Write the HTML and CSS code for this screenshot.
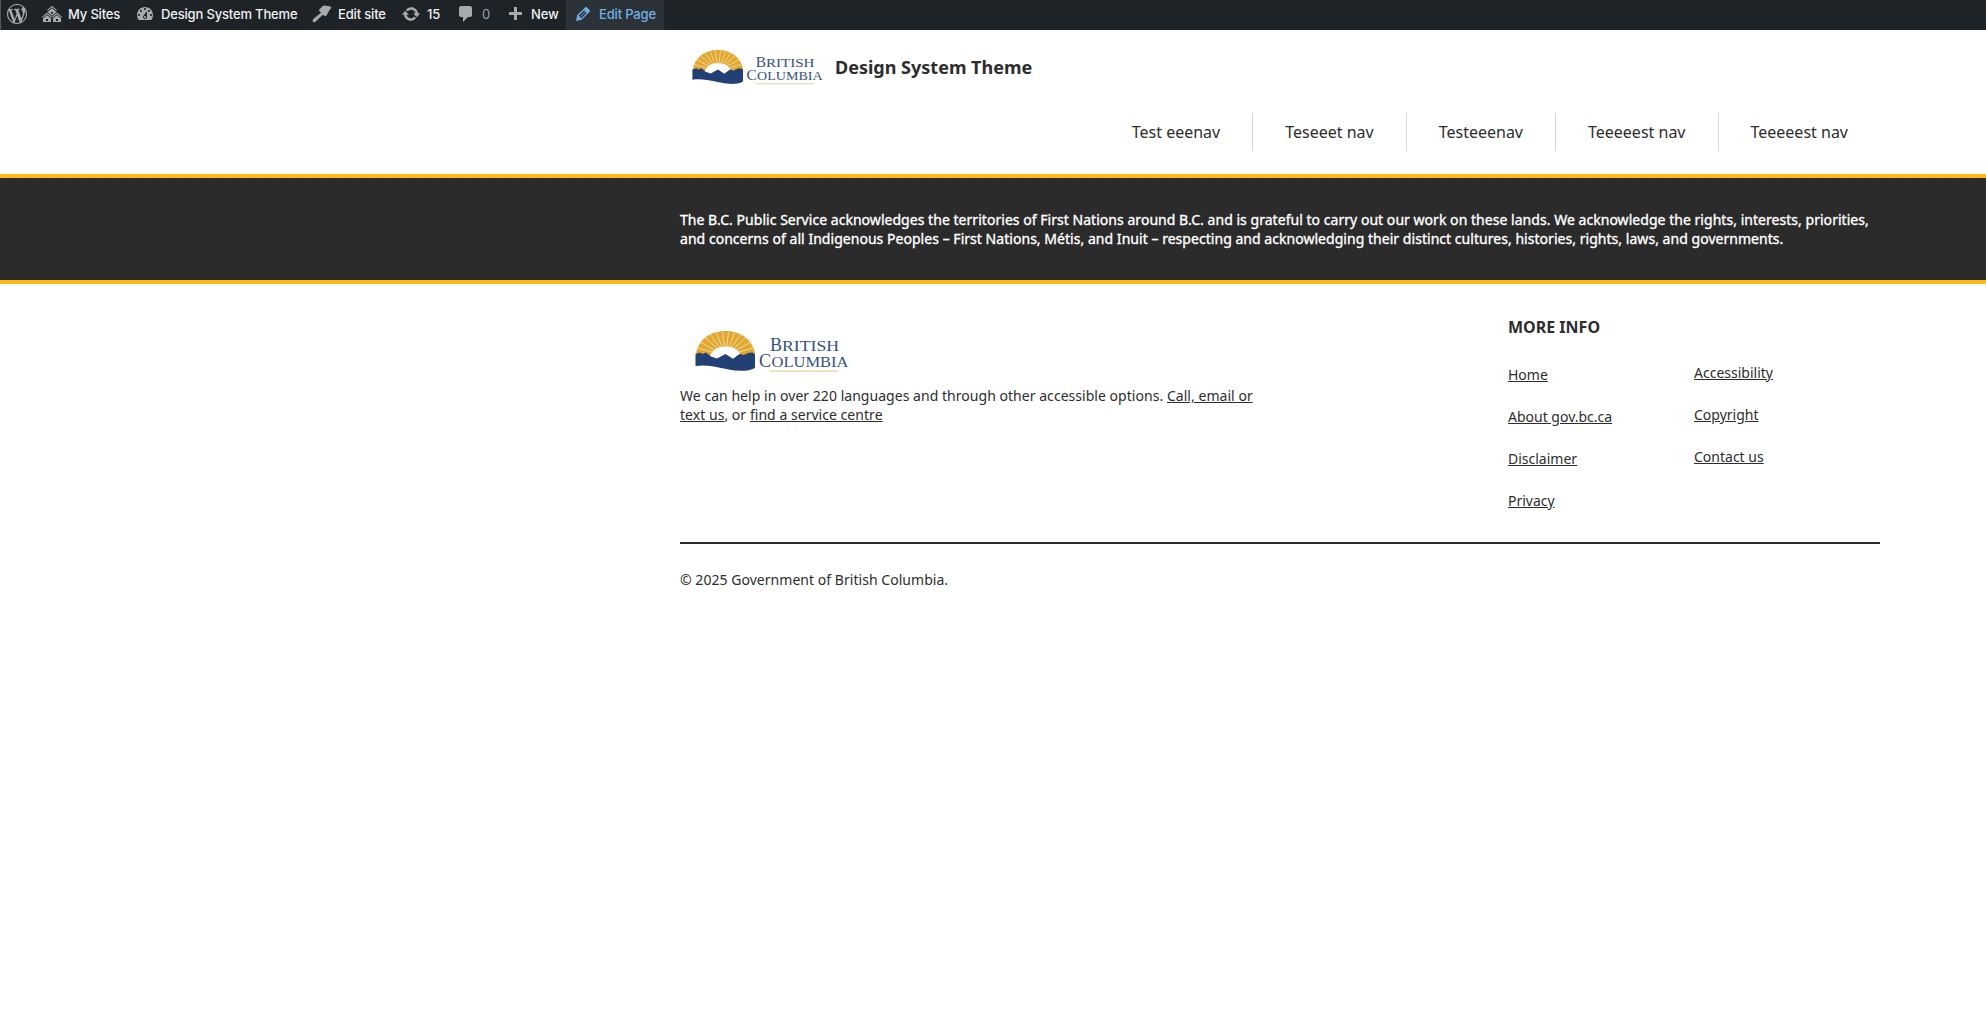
FILE: index.html
```html
<!DOCTYPE html>
<html lang="en">
<head>
<meta charset="utf-8">
<title>Design System Theme</title>
<link rel="stylesheet" href="styles.css">
</head>
<body>
<div class="adminbar">
  <a class="ab ab-wp"><svg viewBox="0 0 20 20"><path d="M20 10c0-5.510-4.490-10-10-10C4.480 0 0 4.490 0 10c0 5.520 4.480 10 10 10 5.510 0 10-4.480 10-10zM7.780 15.370L4.370 6.220c.55-.02 1.170-.08 1.170-.08.5-.06.44-1.130-.06-1.110 0 0-1.450.11-2.370.11-.18 0-.37 0-.58-.01C4.120 2.690 6.870 1.110 10 1.110c2.330 0 4.450.87 6.050 2.340-.68-.11-1.650.39-1.650 1.580 0 .74.45 1.360.9 2.100.35.61.55 1.360.55 2.460 0 1.490-1.400 5-1.400 5l-3.030-8.370c.54-.02.82-.17.82-.17.5-.05.44-1.250-.06-1.220 0 0-1.440.12-2.380.12-.87 0-2.330-.12-2.330-.12-.5-.03-.56 1.200-.06 1.220l.92.08 1.260 3.410zM17.410 10c.24-.64.74-1.870.43-4.250.7 1.290 1.050 2.710 1.050 4.250 0 3.290-1.730 6.240-4.400 7.780.97-2.590 1.940-5.200 2.920-7.780zM6.100 18.090C3.120 16.650 1.110 13.530 1.110 10c0-1.300.23-2.480.72-3.590C3.250 10.300 4.670 14.200 6.100 18.090zm4.030-6.630l2.580 6.980c-.86.29-1.760.45-2.710.45-.79 0-1.570-.11-2.290-.33.81-2.380 1.620-4.740 2.420-7.100z"/></svg></a>
  <a class="ab ab-sites"><svg viewBox="0 0 20 20"><path d="M14.270 6.870L10 3.140 5.730 6.870 5 6.140l5-4.380 5 4.380zM14 8.420l-4.050 3.430L6 8.380v-.74l4-3.500 4 3.500v.78zM11 9.700V8H9v1.700h2zm-1.730 4.030L5 10 .73 13.730 0 13l5-4.380L10 13zm10 0L15 10l-4.270 3.730L10 13l5-4.380L20 13zM5 11l4 3.500V18H1v-3.500zm10 0l4 3.500V18h-8v-3.500zm-9 6v-2H4v2h2zm10 0v-2h-2v2h2z"/></svg><span>My Sites</span></a>
  <a class="ab ab-dash"><svg viewBox="0 0 20 20"><path d="M3.760 16h12.480c1.100-1.370 1.760-3.110 1.760-5 0-4.420-3.580-8-8-8s-8 3.580-8 8c0 1.890.66 3.630 1.760 5zM10 4c.55 0 1 .45 1 1s-.45 1-1 1-1-.45-1-1 .45-1 1-1zM6 6c.55 0 1 .45 1 1s-.45 1-1 1-1-.45-1-1 .45-1 1-1zm8 0c.55 0 1 .45 1 1s-.45 1-1 1-1-.45-1-1 .45-1 1-1zm-5.370 5.550L12 7v6c0 1.100-.9 2-2 2s-2-.9-2-2c0-.57.24-1.080.63-1.450zM4 10c.55 0 1 .45 1 1s-.45 1-1 1-1-.45-1-1 .45-1 1-1zm12 0c.55 0 1 .45 1 1s-.45 1-1 1-1-.45-1-1 .45-1 1-1zm-5 3c0-.55-.45-1-1-1s-1 .45-1 1 .45 1 1 1 1-.45 1-1z"/></svg><span>Design System Theme</span></a>
  <a class="ab ab-edit"><svg viewBox="0 0 20 20"><path d="M7.500 5L11.500 1.500 18 2.200 19.500 3.800 17.500 6 14.500 11.500 12.800 12.300 10.800 10.800 3.500 17.800Q1.500 19 .8 17.500 0 16 1.800 14.600L9 8.800 7 6.500z"/></svg><span>Edit site</span></a>
  <a class="ab ab-updates"><svg viewBox="0 0 20 20"><path d="M10.200 3.280c3.530 0 6.430 2.610 6.920 6h2.080l-3.500 4-3.500-4h2.320c-.45-1.970-2.210-3.450-4.320-3.450-1.450 0-2.730.71-3.540 1.780L4.950 5.660C6.230 4.200 8.110 3.280 10.200 3.280zm-.4 13.440c-3.520 0-6.430-2.610-6.920-6H.8l3.500-4c1.170 1.330 2.330 2.670 3.500 4H5.480c.45 1.970 2.210 3.450 4.320 3.450 1.450 0 2.730-.71 3.540-1.780l1.710 1.950c-1.280 1.460-3.150 2.380-5.250 2.380z"/></svg><span>15</span></a>
  <a class="ab ab-comments"><svg viewBox="0 0 20 20"><path d="M5 2h9c1.100 0 2 .9 2 2v7c0 1.100-.9 2-2 2h-2l-5 5v-5H5c-1.100 0-2-.9-2-2V4c0-1.100.9-2 2-2z"/></svg><span>0</span></a>
  <a class="ab ab-new"><svg viewBox="0 -1 20 20"><path d="M17 7v3h-5v5H9v-5H4V7h5V2h3v5h5z"/></svg><span>New</span></a>
  <a class="ab ab-page"><svg viewBox="0 0 20 20"><path d="M13.890 3.390l2.710 2.720c.46.46.42 1.240.03 1.640l-8.010 8.020-5.560 1.160 1.160-5.580s7.600-7.630 7.990-8.030c.39-.39 1.220-.39 1.680.07zm-2.730 2.790l-5.590 5.610 1.110 1.110 5.540-5.650zm-2.970 8.230l5.580-5.600-1.070-1.080-5.590 5.600z"/></svg><span>Edit Page</span></a>
</div>

<header class="site-header">
  <div class="wrap">
    <a class="brand">
      <svg class="logo brand-logo" viewBox="0 0 154 42">
        <g id="emblem">
          <path fill="#e2a82f" d="M1 24C3 10 15 1 30.500 1S58 10 60 24L44 26H17Z"/>
          <path stroke="#fff" stroke-opacity=".8" stroke-width=".7" d="M30.500 26L5 12M30.500 26L10 7.500M30.500 26L15.500 4.500M30.500 26L21.500 3M30.500 26L27.500 2M30.500 26L33.500 2M30.500 26L39.500 3M30.500 26L45.500 4.500M30.500 26L51 7.500M30.500 26L56 12M30.500 26L3 18M30.500 26L58 18"/>
          <path fill="#fff" d="M15 26Q18 16.500 30.500 16.500T46 26L38 30H22Z"/>
          <path fill="#234075" d="M.5 24L5 22.500l2.500 1.500L11 22.500l5 4 6 2 8.500-4.500 7.500 4.800 6.500-4.800 4.500 1 4-2 4-.5 3 1.500V38C56 40.500 50 41 45 40.800 28 40 17 33.500 .5 36Z"/>
        </g>
        <text x="75" y="21" font-size="18">B</text>
        <text x="87" y="21" font-size="14.500" textLength="57" lengthAdjust="spacingAndGlyphs">RITISH</text>
        <text x="64" y="36.500" font-size="18">C</text>
        <text x="76.500" y="36.500" font-size="14.500" textLength="77" lengthAdjust="spacingAndGlyphs">OLUMBIA</text>
        <path fill="#e9cf94" d="M75 40h68v1.300H75z"/>
      </svg>
      <span>Design System Theme</span>
    </a>
    <nav class="main-nav">
      <a>Test eeenav</a><a>Teseeet nav</a><a>Testeeenav</a><a>Teeeeest nav</a><a>Teeeeest nav</a>
    </nav>
  </div>
</header>

<section class="acknowledgement">
  <p>The B.C. Public Service acknowledges the territories of First Nations around B.C. and is grateful to carry out our work on these lands. We acknowledge the rights, interests, priorities,<br>and concerns of all Indigenous Peoples – First Nations, Métis, and Inuit – respecting and acknowledging their distinct cultures, histories, rights, laws, and governments.</p>
</section>

<footer class="wrap">
  <div class="footer-top">
    <div class="help">
      <svg class="logo footer-logo" viewBox="0 0 154 42">
        <use href="#emblem"/>
        <text x="75" y="21" font-size="18">B</text>
        <text x="87" y="21" font-size="14.500" textLength="57" lengthAdjust="spacingAndGlyphs">RITISH</text>
        <text x="64" y="36.500" font-size="18">C</text>
        <text x="76.500" y="36.500" font-size="14.500" textLength="77" lengthAdjust="spacingAndGlyphs">OLUMBIA</text>
        <path fill="#e9cf94" d="M75 40.500h68v1.200H75z"/>
      </svg>
      <p>We can help in over 220 languages and through other accessible options. <a>Call, email or<br>text us</a>, or <a>find a service centre</a></p>
    </div>
    <div class="more">
      <h2>MORE INFO</h2>
      <div class="cols">
        <ul><li><a>Home</a></li><li><a>About gov.bc.ca</a></li><li><a>Disclaimer</a></li><li><a>Privacy</a></li></ul>
        <ul class="second"><li><a>Accessibility</a></li><li><a>Copyright</a></li><li><a>Contact us</a></li></ul>
      </div>
    </div>
  </div>
  <p class="copyright">© 2025 Government of British Columbia.</p>
</footer>
</body>
</html>
```
FILE: styles.css
```css
* { box-sizing: border-box; }
body {
  margin: 0;
  background: #fff;
  color: #2d2d2d;
  font: 14px/19px "Noto Sans", sans-serif;
}
p, h2, ul { margin: 0; padding: 0; }
.wrap { width: 1200px; margin-left: 680px; }

.adminbar {
  display: flex;
  height: 30px;
  background: #1d2327;
  border-left: 1px solid #50565a;
  color: #f0f0f1;
  font: 500 13px/28px Inter, sans-serif;
  letter-spacing: -.17px;
}
.ab { display: flex; height: 30px; white-space: nowrap; }
.ab svg { width: 20px; height: 20px; flex: none; margin: 4px 6px 0 0; fill: #a7aaad; }
.ab-wp { width: 41px; padding-left: 6px; }
.ab-sites { width: 93px; }
.ab-dash { width: 177px; }
.ab-edit { width: 89px; }
.ab .ab-edit svg { margin-right: 5px; }
.ab-updates { width: 55px; }
.ab-comments { width: 49px; color: #9ca1a6; font-weight: 400; }
.ab-new { width: 61px; }
.ab-page { width: 98px; padding-left: 7px; background: #2c3338; color: #72aee6; }
.ab-page svg { fill: #72aee6; }

.logo {
  flex: none;
  fill: #35517f;
  font-family: "Liberation Serif", serif;
  font-weight: 400;
}
.site-header { height: 148px; border-bottom: 4px solid #fcba19; }
.brand { display: flex; align-items: center; height: 75px; padding-left: 12px; font-size: 18px; font-weight: 700; }
.brand-logo { width: 131px; height: 36px; margin: -2px 12px 0 0; }
.main-nav { display: flex; justify-content: flex-end; padding-top: 8px; font-size: 16px; line-height: 38px; }
.main-nav a { padding: 0 32px; }
.main-nav a + a { border-left: 1px solid #d4d4d4; }

.acknowledgement {
  height: 106px;
  padding: 32px 0 0 680px;
  background: #2b2b2b;
  border-bottom: 4px solid #fcba19;
  color: #fff;
  letter-spacing: .037px;
  -webkit-text-stroke: .35px #fff;
  white-space: nowrap;
}

.footer-top { display: flex; justify-content: space-between; height: 260px; border-bottom: 2px solid #2d2d2d; }
.help { padding-top: 46px; letter-spacing: .037px; white-space: nowrap; }
.footer-logo { display: block; width: 154px; height: 42px; margin: 0 0 14px 15px; letter-spacing: 0; }
.more { width: 372px; padding-top: 31px; }
h2 { font-size: 16px; line-height: 24px; }
.cols { display: flex; padding-top: 26px; }
ul { width: 186px; list-style: none; }
li { height: 42px; }
.second { margin-top: -2px; }
.help a, li a { text-decoration: underline; }
.copyright { padding-top: 26px; letter-spacing: .037px; }
```
